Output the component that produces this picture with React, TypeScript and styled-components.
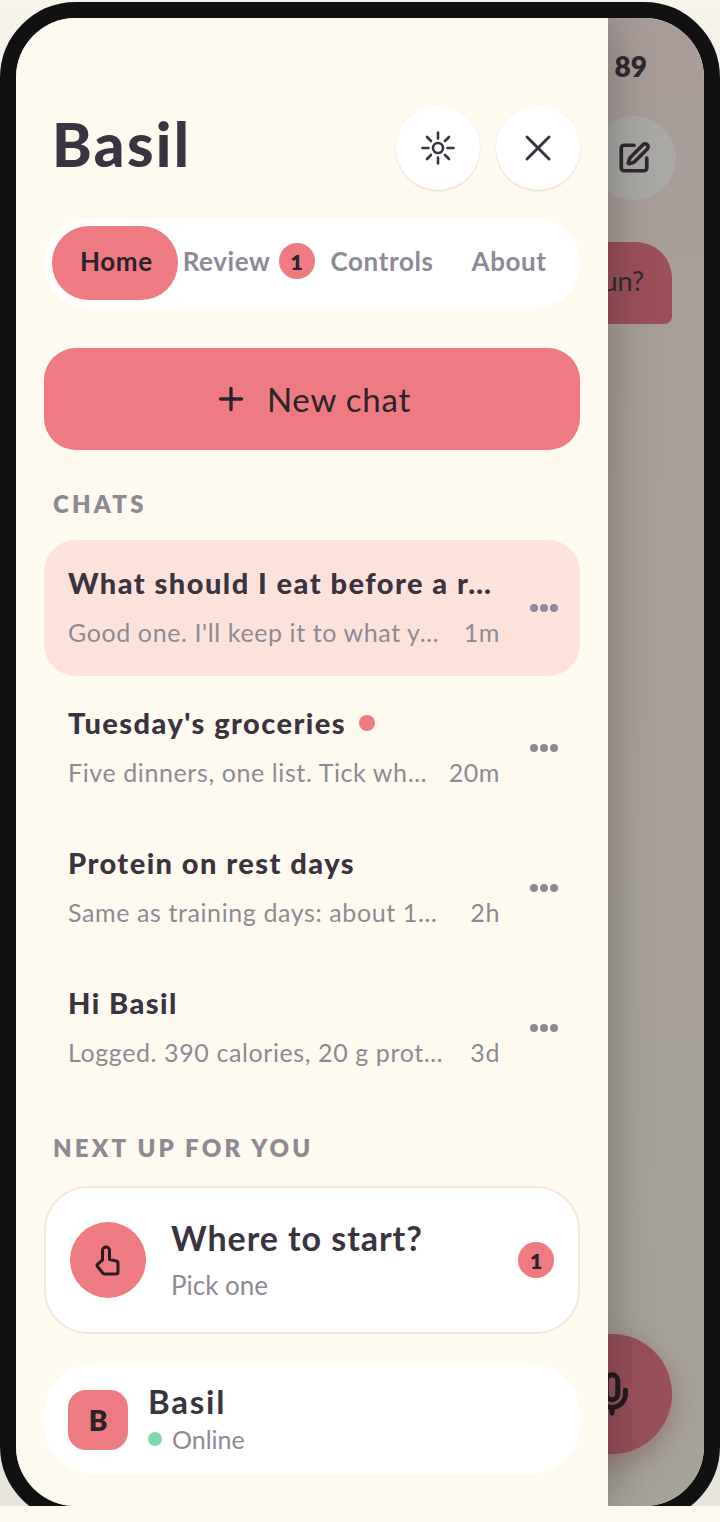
import React from 'react';
import styled, { createGlobalStyle } from 'styled-components';
import { Mic, Plus, SquarePen, X } from 'lucide-react';

const FONT = `Lato, 'Noto Sans', sans-serif`;
const INK = '#3a3340';
const MUTED = '#8e8a94';
const CORAL = '#ee7b82';

const GlobalStyle = createGlobalStyle`
    html, body { margin: 0; padding: 0; background: #fffaf0; }
    body { font-family: ${FONT}; color: ${INK}; }
    * { box-sizing: border-box; }
`;

const Page = styled.div`
    height: 1522px;
    background: #fffaf0;
`;

const Stage = styled.div`
    height: 1506px;
    overflow: hidden;
    padding-top: 2px;
    background: linear-gradient(180deg, #f6f3eb 0%, #e8e5dc 100%);
`;

const Phone = styled.div`
    position: relative;
    width: 720px;
    height: 1520px;
    border: 16px solid #111111;
    border-radius: 76px;
    overflow: hidden;
    background: #a8a29a;
`;

const BackScreen = styled.div`
    height: 100%;
    display: flex;
    flex-direction: column;
    align-items: flex-end;
    padding: 30px 28px 0 0;
    background: linear-gradient(180deg, #a89b98 0%, #a8a097 40%, #a5a29a 100%);
`;

const BackClock = styled.div`
    font-size: 28px;
    font-weight: 800;
    line-height: 36px;
    margin-right: 29px;
    color: #2f2a30;
`;

const BackEdit = styled.div`
    width: 84px;
    height: 84px;
    margin-top: 32px;
    border-radius: 50%;
    background: #a9a8a4;
    display: flex;
    align-items: center;
    justify-content: center;
    color: #2f2a30;
`;

const BackBubble = styled.div`
    width: 200px;
    height: 82px;
    margin: 42px 4px 0 0;
    padding: 22px 28px 0 0;
    text-align: right;
    border-radius: 36px 36px 8px 36px;
    background: #9c505a;
    font-size: 27px;
    color: #2f2a30;
`;

const BackFab = styled.div`
    position: absolute;
    right: 32px;
    top: 1316px;
    width: 120px;
    height: 120px;
    border-radius: 50%;
    background: #98505a;
    box-shadow: 0 8px 28px rgba(120, 40, 50, 0.35);
    display: flex;
    align-items: center;
    justify-content: center;
    color: #221c20;
`;

const Drawer = styled.aside`
    position: absolute;
    left: 0;
    top: 0;
    bottom: 0;
    width: 592px;
    padding: 0 28px;
    background: #fffaf0;
    box-shadow: 0 0 48px rgba(0, 0, 0, 0.28);
    display: flex;
    flex-direction: column;
`;

const Header = styled.header`
    display: flex;
    align-items: center;
    justify-content: space-between;
    padding: 88px 0 0 8px;
`;

const Title = styled.h1`
    margin: 0 0 8px;
    font-size: 60px;
    line-height: 76px;
    font-weight: 900;
    letter-spacing: 2.4px;
    color: ${INK};
`;

const HeaderActions = styled.div`
    display: flex;
    gap: 16px;
`;

const RoundButton = styled.button`
    width: 84px;
    height: 84px;
    padding: 0;
    border: 0;
    border-radius: 50%;
    background: #ffffff;
    box-shadow: 0 1px 2px rgba(200, 170, 150, 0.45);
    color: ${INK};
    display: flex;
    align-items: center;
    justify-content: center;
`;

const Tabs = styled.nav`
    display: flex;
    align-items: center;
    height: 90px;
    margin-top: 28px;
    padding: 0 8px;
    border-radius: 45px;
    background: #ffffff;
`;

const Tab = styled.div<{ $active?: boolean; $left: number; $right: number }>`
    display: flex;
    align-items: center;
    gap: 8px;
    height: 74px;
    padding: 0 ${p => p.$right}px 4px ${p => p.$left}px;
    border-radius: 37px;
    font-size: 26px;
    font-weight: 700;
    letter-spacing: 0.6px;
    color: ${p => (p.$active ? '#2c2229' : MUTED)};
    background: ${p => (p.$active ? CORAL : 'transparent')};
`;

const Badge = styled.span`
    width: 36px;
    height: 36px;
    border-radius: 50%;
    background: ${CORAL};
    color: #2c2229;
    font-size: 21px;
    font-weight: 800;
    letter-spacing: 0;
    display: flex;
    align-items: center;
    justify-content: center;
`;

const NewChat = styled.button`
    height: 102px;
    margin-top: 40px;
    padding-bottom: 2px;
    border: 0;
    border-radius: 32px;
    background: ${CORAL};
    color: #2c2229;
    font-family: ${FONT};
    font-size: 33px;
    letter-spacing: 0.8px;
    display: flex;
    align-items: center;
    justify-content: center;
    gap: 18px;
`;

const SectionLabel = styled.div<{ $top: number }>`
    margin: ${p => p.$top}px 0 0 9px;
    font-size: 24px;
    line-height: 30px;
    font-weight: 800;
    letter-spacing: 3.2px;
    color: ${MUTED};
`;

const ChatList = styled.div`
    display: flex;
    flex-direction: column;
    gap: 4px;
    margin-top: 21px;
`;

const ChatRow = styled.div<{ $active?: boolean }>`
    height: 136px;
    padding: 0 22px 0 24px;
    border-radius: 32px;
    background: ${p => (p.$active ? '#fde2dc' : 'transparent')};
    display: flex;
    align-items: center;
    justify-content: space-between;
`;

const ChatBody = styled.div`
    width: 432px;
    margin-bottom: 4px;
    display: flex;
    flex-direction: column;
    gap: 13px;
`;

const ChatTitle = styled.div`
    display: flex;
    align-items: center;
    gap: 13px;
    font-size: 29px;
    line-height: 38px;
    font-weight: 900;
    letter-spacing: 1.45px;
    white-space: nowrap;
    color: ${INK};
`;

const UnreadDot = styled.span`
    width: 16px;
    height: 16px;
    border-radius: 50%;
    background: ${CORAL};
`;

const ChatMeta = styled.div`
    display: flex;
    justify-content: space-between;
    font-size: 25px;
    line-height: 34px;
    letter-spacing: 0.6px;
    white-space: nowrap;
    color: ${MUTED};
`;

const Dots = styled.div`
    display: flex;
    gap: 2px;
`;

const Dot = styled.span`
    width: 8px;
    height: 8px;
    border-radius: 50%;
    background: ${MUTED};
`;

const StartCard = styled.div`
    height: 148px;
    margin-top: 23px;
    padding: 0 24px;
    border: 2px solid #f3e8dc;
    border-radius: 44px;
    background: #ffffff;
    display: flex;
    align-items: center;
`;

const StartIcon = styled.div`
    width: 76px;
    height: 76px;
    border-radius: 50%;
    background: ${CORAL};
    color: #2c1a20;
    display: flex;
    align-items: center;
    justify-content: center;
`;

const StartText = styled.div`
    flex: 1;
    margin-left: 25px;
    display: flex;
    flex-direction: column;
    gap: 6px;
`;

const StartTitle = styled.div`
    font-size: 34px;
    line-height: 42px;
    margin-bottom: 2px;
    font-weight: 700;
    letter-spacing: 0.95px;
    color: ${INK};
`;

const StartSub = styled.div`
    font-size: 26px;
    line-height: 36px;
    color: ${MUTED};
`;

const Footer = styled.div`
    height: 110px;
    margin-top: 30px;
    padding: 0 24px;
    border-radius: 50px;
    background: #ffffff;
    display: flex;
    align-items: center;
    gap: 20px;
`;

const Avatar = styled.div`
    width: 60px;
    height: 60px;
    margin-top: 2px;
    border-radius: 18px;
    background: ${CORAL};
    color: #2c2229;
    font-size: 28px;
    font-weight: 800;
    display: flex;
    align-items: center;
    justify-content: center;
`;

const FooterName = styled.div`
    font-size: 33px;
    line-height: 36px;
    margin-bottom: 4px;
    font-weight: 700;
    letter-spacing: 1.8px;
    color: ${INK};
`;

const FooterStatus = styled.div`
    display: flex;
    align-items: center;
    gap: 10px;
    font-size: 25px;
    line-height: 32px;
    color: ${MUTED};
`;

const OnlineDot = styled.span`
    width: 14px;
    height: 14px;
    border-radius: 50%;
    background: #7ed8b0;
`;

const SunIcon = () => (
    <svg width="36" height="36" viewBox="0 0 36 36" fill="none" stroke="currentColor" strokeWidth="2.6" strokeLinecap="round">
        <circle cx="18" cy="18" r="5" />
        <path d="M18 2.5v6M18 27.5v6M2.5 18h6M27.5 18h6M7 7l4 4M25 25l4 4M7 29l4-4M25 11l4-4" />
    </svg>
);

const HandIcon = () => (
    <svg width="28" height="33" viewBox="44 32 28 33" fill="none" stroke="currentColor" strokeWidth="3" strokeLinejoin="round" strokeLinecap="round">
        <path d="M52.5 48 V38.5 a3.5 3.5 0 0 1 7 0 V47.5 l6 1.2 a2.8 2.8 0 0 1 2.5 2.8 V60 a2 2 0 0 1-2 2 H54.5 a2 2 0 0 1-1.5-.7 L47.5 54.5 a1.8 1.8 0 0 1 .2-2.4 Z" />
    </svg>
);

const chats = [
    { title: 'What should I eat before a r…', preview: "Good one. I'll keep it to what y…", time: '1m', active: true },
    { title: "Tuesday's groceries", preview: 'Five dinners, one list. Tick wh…', time: '20m', unread: true },
    { title: 'Protein on rest days', preview: 'Same as training days: about 1…', time: '2h' },
    { title: 'Hi Basil', preview: 'Logged. 390 calories, 20 g prot…', time: '3d' },
];

const App: React.FC = () => {
    return (
        <Page>
            <GlobalStyle />
            <Stage>
                <Phone>
                    <BackScreen>
                        <BackClock>89</BackClock>
                        <BackEdit><SquarePen size={34} strokeWidth={2.6} /></BackEdit>
                        <BackBubble>run?</BackBubble>
                    </BackScreen>
                    <BackFab><Mic size={46} strokeWidth={2.6} /></BackFab>
                    <Drawer>
                        <Header>
                            <Title>Basil</Title>
                            <HeaderActions>
                                <RoundButton><SunIcon /></RoundButton>
                                <RoundButton><X size={44} strokeWidth={1.6} /></RoundButton>
                            </HeaderActions>
                        </Header>
                        <Tabs>
                            <Tab $active $left={28} $right={25}>Home</Tab>
                            <Tab $left={5} $right={5}>Review <Badge>1</Badge></Tab>
                            <Tab $left={11} $right={19}>Controls</Tab>
                            <Tab $left={19} $right={20}>About</Tab>
                        </Tabs>
                        <NewChat><Plus size={36} strokeWidth={2.2} /> New chat</NewChat>
                        <SectionLabel $top={39}>CHATS</SectionLabel>
                        <ChatList>
                            {chats.map(chat => (
                                <ChatRow key={chat.title} $active={chat.active}>
                                    <ChatBody>
                                        <ChatTitle>
                                            {chat.title}
                                            {chat.unread && <UnreadDot />}
                                        </ChatTitle>
                                        <ChatMeta>
                                            <span>{chat.preview}</span>
                                            <span>{chat.time}</span>
                                        </ChatMeta>
                                    </ChatBody>
                                    <Dots><Dot /><Dot /><Dot /></Dots>
                                </ChatRow>
                            ))}
                        </ChatList>
                        <SectionLabel $top={37}>NEXT UP FOR YOU</SectionLabel>
                        <StartCard>
                            <StartIcon><HandIcon /></StartIcon>
                            <StartText>
                                <StartTitle>Where to start?</StartTitle>
                                <StartSub>Pick one</StartSub>
                            </StartText>
                            <Badge>1</Badge>
                        </StartCard>
                        <Footer>
                            <Avatar>B</Avatar>
                            <div>
                                <FooterName>Basil</FooterName>
                                <FooterStatus><OnlineDot />Online</FooterStatus>
                            </div>
                        </Footer>
                    </Drawer>
                </Phone>
            </Stage>
        </Page>
    );
};

export default App;
